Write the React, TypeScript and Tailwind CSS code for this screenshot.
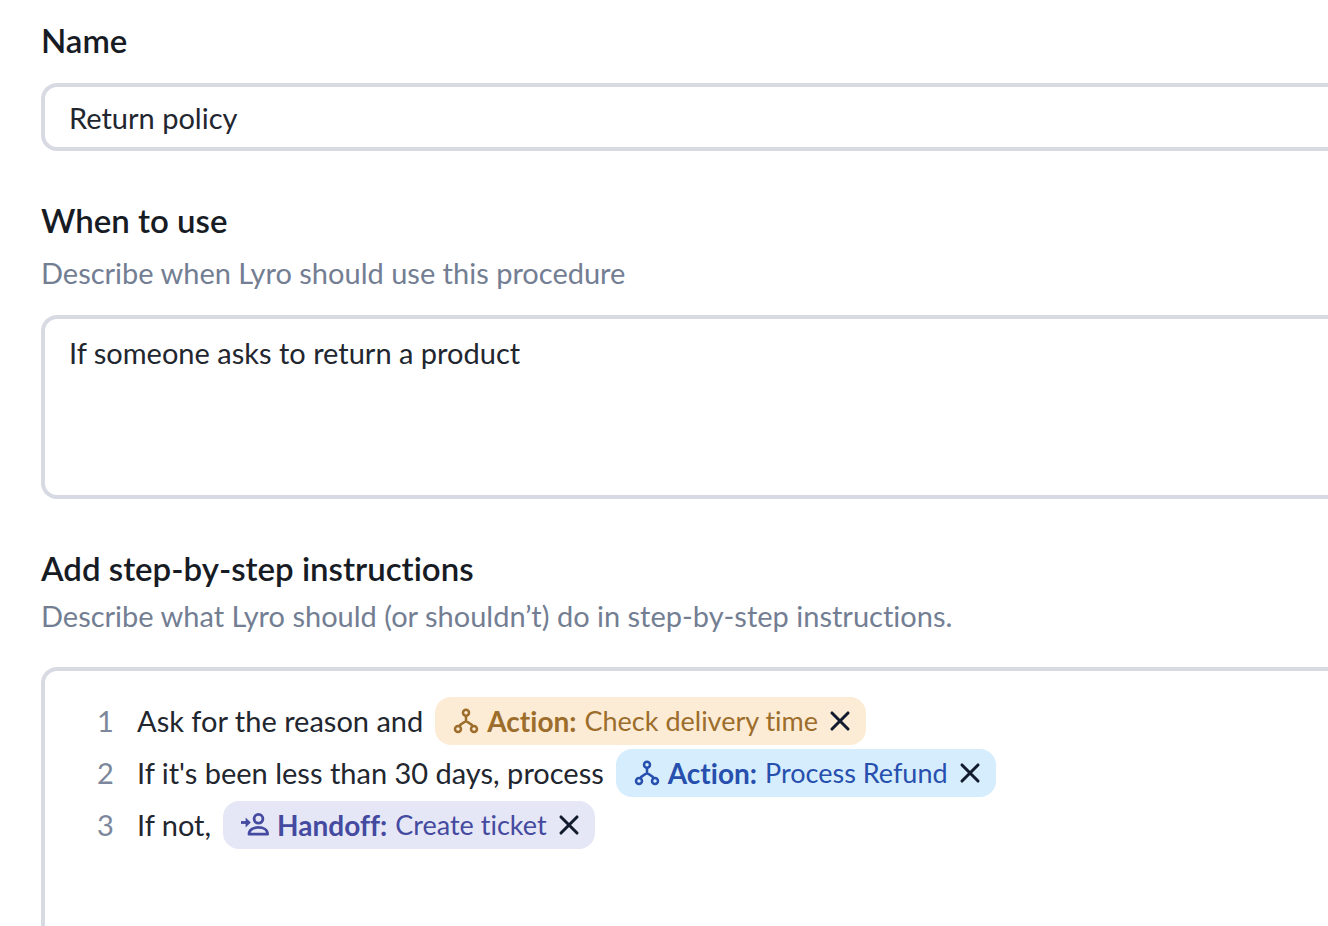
import { useState } from 'react';
import { X } from 'lucide-react';

type ChipTone = 'orange' | 'blue' | 'purple';

interface Chip {
  kind: 'Action' | 'Handoff';
  label: string;
  tone: ChipTone;
}

interface Step {
  id: number;
  text: string;
  chip: Chip | null;
}

const chipTones: Record<ChipTone, string> = {
  orange: 'bg-[#fdecd5] text-[#9c6d2b]',
  blue: 'bg-[#d6edfd] text-[#2750ae]',
  purple: 'bg-[#e6e7f6] text-[#444aa0]',
};

const initialSteps: Step[] = [
  {
    id: 1,
    text: 'Ask for the reason and',
    chip: { kind: 'Action', label: 'Check delivery time', tone: 'orange' },
  },
  {
    id: 2,
    text: "If it's been less than 30 days, process",
    chip: { kind: 'Action', label: 'Process Refund', tone: 'blue' },
  },
  {
    id: 3,
    text: 'If not,',
    chip: { kind: 'Handoff', label: 'Create ticket', tone: 'purple' },
  },
];

const ActionIcon = () => (
  <svg viewBox="0 0 26 26" className="w-[26px] h-[26px] shrink-0" fill="none" stroke="currentColor" strokeWidth="2.5" aria-hidden="true">
    <circle cx="13" cy="4.8" r="3" />
    <circle cx="5" cy="21" r="3" />
    <circle cx="21" cy="21" r="3" />
    <path d="M13 7.8v6M6.5 18.4c.8-2.800 3.500-3.400 6.500-5.200 3 1.800 5.700 2.400 6.500 5.200" />
  </svg>
);

const HandoffIcon = () => (
  <svg viewBox="0 0 28 26" className="w-7 h-[26px] shrink-0" fill="none" stroke="currentColor" strokeWidth="2.8" aria-hidden="true">
    <circle cx="17.5" cy="6.8" r="4.4" />
    <path d="M8 22.200c0-4.600 4.200-6.800 9.300-6.800s9.300 2.200 9.300 6.800z" strokeLinejoin="round" />
    <path d="M0 10.500h6" />
    <path d="M4.600 5.500l5.200 5-5.200 5z" fill="currentColor" stroke="none" />
  </svg>
);

const StepChip = ({ chip, onRemove }: { chip: Chip; onRemove: () => void }) => (
  <span className={`flex h-12 items-center rounded-2xl pl-[18px] pr-2.5 ${chipTones[chip.tone]}`}>
    {chip.kind === 'Action' ? <ActionIcon /> : <HandoffIcon />}
    <span className="ml-2 text-[28px] font-bold">{chip.kind}:</span>
    <span className="ml-2 text-[27px]">{chip.label}</span>
    <button
      type="button"
      aria-label={`Remove ${chip.label}`}
      onClick={onRemove}
      className="ml-1.5 flex size-8 items-center justify-center text-[#131c2e]"
    >
      <X className="size-8" strokeWidth={2.3} />
    </button>
  </span>
);

export default function App() {
  const [name, setName] = useState('Return policy');
  const [usage, setUsage] = useState('If someone asks to return a product');
  const [steps, setSteps] = useState(initialSteps);

  const removeChip = (id: number) => {
    setSteps(steps.map((step) => (step.id === id ? { ...step, chip: null } : step)));
  };

  return (
    <main className="flex min-h-screen flex-col bg-white pl-[41px] pt-6 font-['Lato',sans-serif] text-[29px] leading-8 text-[#22262f] [font-variant-ligatures:none]">
      {/* Name */}
      <label htmlFor="name" className="text-[33px] font-semibold text-[#171b24]">
        Name
      </label>
      <input
        id="name"
        value={name}
        onChange={(e) => setName(e.target.value)}
        className="mt-[27px] h-[68px] w-full rounded-l-2xl border-4 border-r-0 border-[#d7dae3] px-6 outline-none"
      />

      {/* When to use */}
      <label htmlFor="usage" className="mt-[53px] text-[33px] font-semibold text-[#171b24]">
        When to use
      </label>
      <p id="usage-hint" className="mt-[21px] text-[#737e93]">
        Describe when Lyro should use this procedure
      </p>
      <textarea
        id="usage"
        aria-describedby="usage-hint"
        value={usage}
        onChange={(e) => setUsage(e.target.value)}
        className="mt-[26px] h-[184px] w-full resize-none rounded-l-2xl border-4 border-r-0 border-[#d7dae3] px-6 py-[18px] outline-none"
      />

      {/* Instructions */}
      <h2 className="mt-[53px] text-[33px] font-semibold text-[#171b24]">Add step-by-step instructions</h2>
      <p className="mt-4 text-[#737e93]">
        Describe what Lyro should (or shouldn’t) do in step-by-step instructions.
      </p>
      <ol className="mt-[35px] flex-1 rounded-tl-2xl border-l-4 border-t-4 border-[#d7dae3] pl-12 pt-6">
        {steps.map((step) => (
          <li key={step.id} className="flex h-[52px] items-center whitespace-nowrap">
            <span className="w-11 pl-1 text-[#7d879b]">{step.id}</span>
            <span className="mr-3">{step.text}</span>
            {step.chip && <StepChip chip={step.chip} onRemove={() => removeChip(step.id)} />}
          </li>
        ))}
      </ol>
    </main>
  );
}
